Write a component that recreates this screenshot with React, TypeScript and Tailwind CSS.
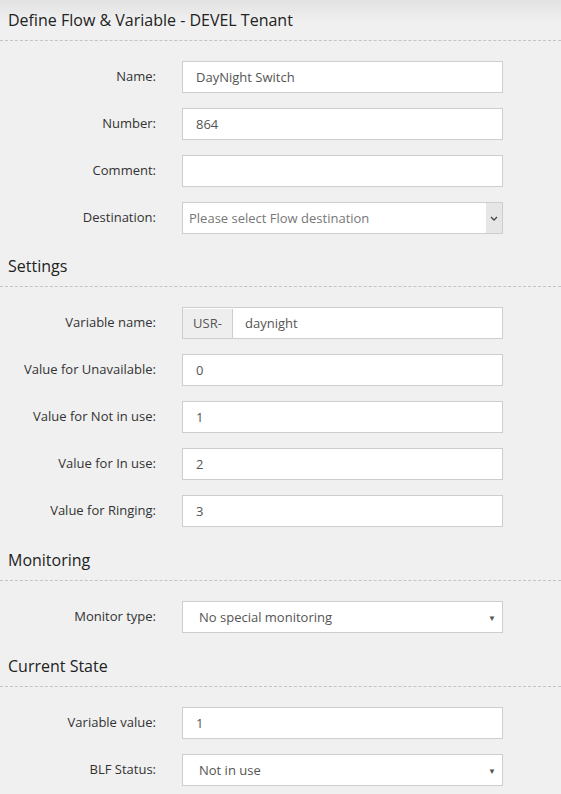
import type { ReactNode } from "react";

function SectionTitle({ title, top }: { title: string; top: string }) {
  return (
    <div className={`${top} border-b border-dashed border-[#c4c4c4] pb-[9px] pl-2`}>
      <h2 className="text-[16px] leading-[22px] text-[#222]">{title}</h2>
    </div>
  );
}

function Row({ label, children }: { label: string; children: ReactNode }) {
  return (
    <div className="flex items-center">
      <label className="w-[156px] shrink-0 text-right text-[13px] text-[#333]">{label}</label>
      <div className="ml-[26px] w-[321px]">{children}</div>
    </div>
  );
}

function TextBox({ value }: { value: string }) {
  return (
    <div className="flex h-[32px] items-center border border-[#cdcdcd] bg-white pl-[13px] pt-px text-[13px] text-[#555]">
      {value}
    </div>
  );
}

function Dropdown({ value }: { value: string }) {
  return (
    <div className="flex h-[32px] items-center justify-between border border-[#cdcdcd] bg-white pl-[16px] pr-[6px] pt-px text-[13px] text-[#555]">
      <span>{value}</span>
      <span className="text-[8px] text-[#555]">▼</span>
    </div>
  );
}

export default function App() {
  return (
    <div
      className="min-h-screen bg-[linear-gradient(to_bottom,#e2e2e2,#f0f0f0_22px,#f0f0f0)] pb-2 text-[#333]"
      style={{ fontFamily: '"Open Sans", "Liberation Sans", sans-serif' }}
    >
      <SectionTitle title="Define Flow & Variable - DEVEL Tenant" top="pt-[9px]" />
      <div className="mt-5 flex flex-col gap-[15px]">
        <Row label="Name:">
          <TextBox value="DayNight Switch" />
        </Row>
        <Row label="Number:">
          <TextBox value="864" />
        </Row>
        <Row label="Comment:">
          <TextBox value="" />
        </Row>
        <Row label="Destination:">
          <div className="flex h-[32px] items-stretch border border-[#cdcdcd] bg-white text-[13px] text-[#777]">
            <span className="flex flex-1 items-center pl-[6px] pt-px">Please select Flow destination</span>
            <span className="flex w-[16px] items-center justify-center bg-[#e6e6e6]">
              <svg width="8" height="5" viewBox="0 0 8 5" fill="none">
                <path d="M1 1l3 3 3-3" stroke="#444" strokeWidth="1.3" />
              </svg>
            </span>
          </div>
        </Row>
      </div>

      <SectionTitle title="Settings" top="mt-[21px]" />
      <div className="mt-5 flex flex-col gap-[15px]">
        <Row label="Variable name:">
          <div className="flex h-[32px] border border-[#cdcdcd] bg-white pt-px text-[13px] text-[#555]">
            <span className="flex w-[50px] items-center justify-center border-r border-[#cdcdcd] bg-[#eeeeee]">USR-</span>
            <span className="flex items-center pl-[12px]">daynight</span>
          </div>
        </Row>
        <Row label="Value for Unavailable:">
          <TextBox value="0" />
        </Row>
        <Row label="Value for Not in use:">
          <TextBox value="1" />
        </Row>
        <Row label="Value for In use:">
          <TextBox value="2" />
        </Row>
        <Row label="Value for Ringing:">
          <TextBox value="3" />
        </Row>
      </div>

      <SectionTitle title="Monitoring" top="mt-[22px]" />
      <div className="mt-5 flex flex-col gap-[15px]">
        <Row label="Monitor type:">
          <Dropdown value="No special monitoring" />
        </Row>
      </div>

      <SectionTitle title="Current State" top="mt-[22px]" />
      <div className="mt-5 flex flex-col gap-[15px]">
        <Row label="Variable value:">
          <TextBox value="1" />
        </Row>
        <Row label="BLF Status:">
          <Dropdown value="Not in use" />
        </Row>
      </div>
    </div>
  );
}
